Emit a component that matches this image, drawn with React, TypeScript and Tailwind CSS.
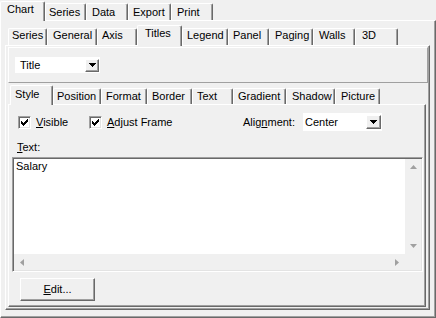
import React from 'react'

/** classic 3D edges */
const raised =
  'border border-t-white border-l-white border-r-[#696969] border-b-[#696969] shadow-[inset_-1px_-1px_0_#a0a0a0]'
const sunken =
  'border border-t-[#a0a0a0] border-l-[#a0a0a0] border-r-white border-b-white shadow-[inset_1px_1px_0_#696969,inset_-1px_-1px_0_#e3e3e3]'
const tabEdge =
  'flex shrink-0 bg-[#f0f0f0] border-t border-l border-r border-t-white border-l-white border-r-[#696969] shadow-[inset_-1px_0_0_#a0a0a0] rounded-t-[2px]'

type TabDef = { label: string; cls: string; sel?: boolean }

const chartTabs: TabDef[] = [
  { label: 'Chart', cls: 'w-[45px] h-[20px] pl-[6px] pt-px', sel: true },
  { label: 'Series', cls: 'w-[41px] h-[17px] pl-[3px] pt-[2px]' },
  { label: 'Data', cls: 'w-[42px] h-[17px] pl-[5px] pt-[2px]' },
  { label: 'Export', cls: 'w-[43px] h-[17px] pl-[4px] pt-[2px]' },
  { label: 'Print', cls: 'w-[42px] h-[17px] pl-[5px] pt-[2px]' },
]

const titleTabs: TabDef[] = [
  { label: 'Series', cls: 'w-[39px] h-[17px] pl-[3px]' },
  { label: 'General', cls: 'w-[50px] h-[17px] pl-[5px]' },
  { label: 'Axis', cls: 'w-[40px] h-[17px] pl-[4px]' },
  { label: 'Titles', cls: 'w-[45px] h-[21px] pl-[7px] pt-px', sel: true },
  { label: 'Legend', cls: 'w-[46px] h-[17px] pl-[4px]' },
  { label: 'Panel', cls: 'w-[41px] h-[17px] pl-[4px]' },
  { label: 'Paging', cls: 'w-[44px] h-[17px] pl-[5px]' },
  { label: 'Walls', cls: 'w-[42px] h-[17px] pl-[5px]' },
  { label: '3D', cls: 'w-[43px] h-[17px] pl-[6px]' },
]

const styleTabs: TabDef[] = [
  { label: 'Style', cls: 'w-[43px] h-[20px] pl-[4px] pt-[2px]', sel: true },
  { label: 'Position', cls: 'w-[48px] h-[16px] pl-[3px] pt-px' },
  { label: 'Format', cls: 'w-[46px] h-[16px] pl-[4px] pt-px' },
  { label: 'Border', cls: 'w-[45px] h-[16px] pl-[4px] pt-px' },
  { label: 'Text', cls: 'w-[41px] h-[16px] pl-[4px] pt-px' },
  { label: 'Gradient', cls: 'w-[53px] h-[16px] pl-[4px] pt-px' },
  { label: 'Shadow', cls: 'w-[49px] h-[16px] pl-[5px] pt-px' },
  { label: 'Picture', cls: 'w-[45px] h-[16px] pl-[5px] pt-px' },
]

function Tabs({ tabs }: { tabs: TabDef[] }) {
  return (
    <>
      {tabs.map((t) => (
        <div key={t.label} className={`${tabEdge} ${t.cls} ${t.sel ? 'relative z-10 -mb-px' : ''}`}>
          <span className="whitespace-nowrap">{t.label}</span>
        </div>
      ))}
    </>
  )
}

function DropButton({ cls }: { cls: string }) {
  return (
    <div className={`${raised} ${cls} flex items-center justify-center bg-[#f0f0f0]`}>
      <svg width="7" height="4" viewBox="0 0 7 4" shapeRendering="crispEdges" aria-hidden>
        <polygon points="0,0 7,0 3.5,4" fill="#000" />
      </svg>
    </div>
  )
}

function CheckBox() {
  return (
    <div className={`${sunken} w-[13px] h-[13px] bg-white flex items-center justify-center shrink-0`}>
      <svg width="7" height="7" viewBox="0 0 7 7" shapeRendering="crispEdges" aria-hidden>
        <path
          d="M6 0h1v3h-1v1h-1v1h-1v1h-1v1h-1v-1h-1v-1h-1v-3h1v1h1v1h1v-1h1v-1h1z"
          fill="#000"
        />
      </svg>
    </div>
  )
}

function Arrow({ dir }: { dir: 'up' | 'down' | 'left' | 'right' }) {
  const pts =
    dir === 'up'
      ? '0,4 7,4 3.5,0'
      : dir === 'down'
        ? '0,0 7,0 3.5,4'
        : dir === 'left'
          ? '4,0 4,7 0,3.5'
          : '0,0 0,7 4,3.5'
  const w = dir === 'up' || dir === 'down' ? 7 : 4
  const h = dir === 'up' || dir === 'down' ? 4 : 7
  return (
    <svg width={w} height={h} viewBox={`0 0 ${w} ${h}`} aria-hidden>
      <polygon points={pts} fill="#a0a0a0" />
    </svg>
  )
}

export default function App() {
  return (
    <div className="w-[436px] h-[318px] overflow-hidden bg-[#f0f0f0] text-[11px] leading-[13px] text-black font-['Liberation_Sans',Arial,sans-serif]">
      {/* top tabs */}
      <div className="flex h-[20px] items-end">
        <Tabs tabs={chartTabs} />
      </div>

      {/* Chart page */}
      <div className={`${raised} w-[436px] h-[298px]`}>
        <div className="flex h-[24px] items-end pl-[7px]">
          <Tabs tabs={titleTabs} />
        </div>

        {/* Titles page */}
        <div className={`${raised} ml-[4px] w-[425px] h-[265px]`}>
          <div className="mt-px ml-[2px] w-[420px] h-[36px] border border-t-white border-l-white border-r-[#a0a0a0] border-b-[#a0a0a0] pl-[6px] pt-[9px]">
            <div className="w-[85px] h-[16px] bg-white flex items-center justify-between">
              <span className="pl-[5px]">Title</span>
              <DropButton cls="w-[14px] h-[13px] mr-px" />
            </div>
          </div>

          <div className="flex h-[21px] items-end pl-[4px]">
            <Tabs tabs={styleTabs} />
          </div>

          {/* Style page */}
          <div className={`${raised} ml-[2px] w-[418px] h-[203px]`}>
            <div className="mt-[8px] h-[18px] flex items-center pl-[9px]">
              <div className="w-[71px] flex items-center gap-[5px]">
                <CheckBox />
                <span>
                  <u>V</u>isible
                </span>
              </div>
              <div className="w-[154px] flex items-center gap-[5px]">
                <CheckBox />
                <span>
                  <u>A</u>djust Frame
                </span>
              </div>
              <span className="w-[60px]">
                Alig<u>n</u>ment:
              </span>
              <div className="w-[79px] h-[18px] bg-white flex items-center justify-between">
                <span className="pl-[2px]">Center</span>
                <DropButton cls="w-[15px] h-[14px] mr-px" />
              </div>
            </div>

            <div className="mt-[10px] pl-[8px]">
              <u>T</u>ext:
            </div>

            {/* memo */}
            <div className={`${sunken} mt-[3px] ml-[3px] w-[411px] h-[115px] bg-white p-px flex flex-col`}>
              <div className="flex flex-1 min-h-0">
                <div className="flex-1 pl-[2px] pt-px">Salary</div>
                <div className="w-[16px] bg-[#f0f0f0] flex flex-col items-center justify-between py-[6px]">
                  <Arrow dir="up" />
                  <Arrow dir="down" />
                </div>
              </div>
              <div className="flex h-[16px]">
                <div className="flex-1 bg-[#f0f0f0] flex items-center justify-between px-[6px]">
                  <Arrow dir="left" />
                  <Arrow dir="right" />
                </div>
                <div className="w-[16px] bg-[#f0f0f0]" />
              </div>
            </div>

            <div className={`${raised} mt-[6px] ml-[11px] w-[75px] h-[23px] flex items-center justify-center`}>
              <span>
                <u>E</u>dit...
              </span>
            </div>
          </div>
        </div>
      </div>
    </div>
  )
}
